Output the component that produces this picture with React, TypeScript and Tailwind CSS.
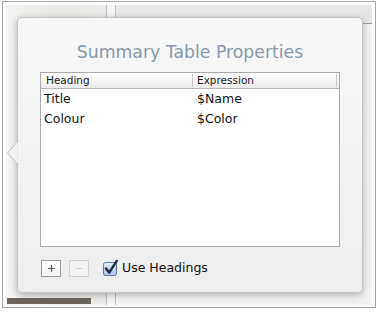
import { Plus, Minus } from 'lucide-react';

const rows = [
  { heading: 'Title', expression: '$Name' },
  { heading: 'Colour', expression: '$Color' },
];

function CheckBox() {
  return (
    <svg width="17" height="17" viewBox="0 0 17 17" className="shrink-0">
      <defs>
        <linearGradient id="cbFill" x1="0" y1="0" x2="0" y2="1">
          <stop offset="0" stopColor="#e4eefb" />
          <stop offset="1" stopColor="#a8c4ea" />
        </linearGradient>
      </defs>
      <rect x="0.5" y="2.5" width="13" height="13" rx="2" fill="url(#cbFill)" stroke="#5f7696" />
      <path d="M3 8.5 L6.2 12.6 L13.8 0.8" fill="none" stroke="#1c2a48" strokeWidth="2.4" strokeLinejoin="round" strokeLinecap="round" />
    </svg>
  );
}

function Popover() {
  return (
    <div className="absolute left-[14px] top-[15px] w-[346px] h-[276px]">
      {/* left arrow */}
      <svg width="12" height="24" viewBox="0 0 12 24" className="absolute left-[-10px] top-[124px]">
        <polygon points="11,0 0.5,12 11,24" fill="#f3f3f3" stroke="#bdbdbd" strokeWidth="1" />
        <rect x="10.5" y="1" width="2" height="22" fill="#f3f3f3" />
      </svg>
      <div className="flex flex-col h-full rounded-[5px] border border-[#c4c4c4] bg-gradient-to-b from-[#f8f8f8] to-[#eeeeee] shadow-[0_2px_7px_rgba(0,0,0,0.28)] px-[22px]">
        <h1 className="mt-[22px] h-[24px] leading-[24px] text-center text-[17.3px] text-[#8797ac] font-['DejaVu_Sans',sans-serif]">
          Summary Table Properties
        </h1>

        {/* table */}
        <div className="mt-[8px] h-[175px] border border-[#a9a9a9] bg-white flex flex-col font-['DejaVu_Sans',sans-serif]">
          <div className="flex h-[16px] shrink-0 bg-gradient-to-b from-white to-[#ececec] border-b border-[#b5b5b5] text-[10.5px] text-[#1a1a1a]">
            <div className="w-[152px] pl-[5px] border-r border-[#c6c6c6] my-[1px] leading-[13px]">Heading</div>
            <div className="flex-1 pl-[4px] border-r border-[#c6c6c6] my-[1px] leading-[13px]">Expression</div>
            <div className="w-[2px]" />
          </div>
          {rows.map(r => (
            <div key={r.heading} className="flex h-[20px] items-center text-[12.5px] text-[#111]">
              <div className="w-[153px] pl-[3px]">{r.heading}</div>
              <div className="flex-1 pl-[3px]">{r.expression}</div>
            </div>
          ))}
        </div>

        {/* footer controls */}
        <div className="mt-[12px] flex items-center font-['DejaVu_Sans',sans-serif]">
          <button className="w-[20px] h-[17px] ml-[1px] flex items-center justify-center border border-[#9a9a9a] bg-gradient-to-b from-white to-[#f4f4f4] text-[#222]">
            <Plus size={11} strokeWidth={1.6} />
          </button>
          <button className="w-[20px] h-[17px] ml-[8px] flex items-center justify-center border border-[#d3d3d3] bg-[#f3f3f3] text-[#c4c4c4]">
            <Minus size={9} strokeWidth={2} />
          </button>
          <label className="ml-[14px] flex items-center gap-[2px] text-[12.5px] text-[#111]">
            <CheckBox />
            <span>Use Headings</span>
          </label>
        </div>
      </div>
    </div>
  );
}

export default function App() {
  return (
    <div className="w-[380px] h-[312px] bg-white pl-[2px] pt-[1px] pr-[4px] pb-[4px]">
      <div className="relative h-full border border-[#a4a4a4] bg-white px-[3px] pt-[3px] pb-[2px]">
        <div className="flex h-full bg-[#eaeae8]">
          {/* left pane */}
          <div className="w-[100px] flex flex-col justify-end bg-gradient-to-r from-[#f4f4f2] via-[#e8e8e6] to-[#ebebe9]">
            <div className="ml-[1px] mb-[1px] w-[84px] h-[6px] bg-[#6c655e]" />
          </div>
          <div className="w-[1px] bg-[#bcbcbc]" />
          <div className="w-[8px] bg-[#f3f3f3]" />
          <div className="w-[1px] bg-[#bcbcbc]" />
          {/* right pane */}
          <div className="flex-1 flex flex-col bg-[#f1f1f1]">
            <div className="h-[19px] bg-[#e6e6e6] border-b border-[#9f9f9f]" />
          </div>
        </div>
        <Popover />
      </div>
    </div>
  );
}
